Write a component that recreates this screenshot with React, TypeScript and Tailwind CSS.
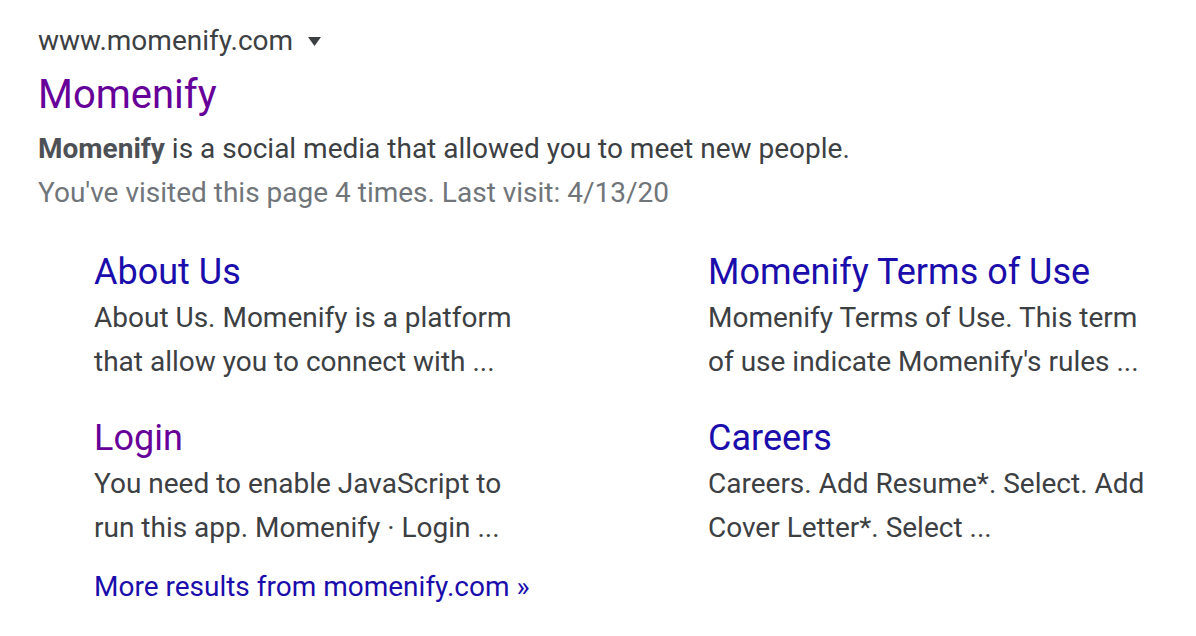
import React from "react";

const font = { fontFamily: "Roboto, 'Liberation Sans', Arial, sans-serif" };

function Sitelink({
  title,
  lines,
  visited,
}: {
  title: string;
  lines: string[];
  visited?: boolean;
}) {
  return (
    <div className="flex flex-col">
      <div
        className={`text-[36px] leading-[48px] whitespace-nowrap ${
          visited ? "text-[#660099]" : "text-[#1a0dab]"
        }`}
      >
        {title}
      </div>
      {lines.map((l, i) => (
        <div
          key={i}
          className="text-[28px] leading-[44px] text-[#3c4043] whitespace-nowrap"
        >
          {l}
        </div>
      ))}
    </div>
  );
}

export default function App() {
  return (
    <div
      className="w-[1196px] h-[636px] bg-white overflow-hidden pl-[38px] pt-[21px]"
      style={font}
    >
      <div className="flex items-center h-[40px]">
        <span className="text-[28px] leading-[40px] text-[#3c4043]">
          www.momenify.com
        </span>
        <svg
          width="13"
          height="9"
          viewBox="0 0 13 9"
          className="ml-[15px] mt-[1px]"
        >
          <polygon points="0,0 13,0 6.5,9" fill="#3c4043" />
        </svg>
      </div>
      <div className="mt-[8px] text-[40px] leading-[52px] text-[#660099]">
        Momenify
      </div>
      <div className="mt-[6px] text-[28px] leading-[44px] text-[#3c4043]">
        <span className="font-bold text-[#4d5156]">Momenify</span> is a social
        media that allowed you to meet new people.
      </div>
      <div className="mt-[2px] text-[28px] leading-[40px] text-[#70757a]">
        You've visited this page 4 times. Last visit: 4/13/20
      </div>
      <div className="mt-[35px] pl-[56px] grid grid-cols-[614px_1fr]">
        <div className="flex flex-col">
          <Sitelink
            title="About Us"
            lines={[
              "About Us. Momenify is a platform",
              "that allow you to connect with ...",
            ]}
          />
          <div className="mt-[30px]">
            <Sitelink
              title="Login"
              visited
              lines={[
                "You need to enable JavaScript to",
                "run this app. Momenify · Login ...",
              ]}
            />
          </div>
          <div className="mt-[15px] text-[28px] leading-[44px] text-[#1a0dab] whitespace-nowrap">
            More results from momenify.com »
          </div>
        </div>
        <div className="flex flex-col">
          <Sitelink
            title="Momenify Terms of Use"
            lines={[
              "Momenify Terms of Use. This term",
              "of use indicate Momenify's rules ...",
            ]}
          />
          <div className="mt-[30px]">
            <Sitelink
              title="Careers"
              lines={[
                "Careers. Add Resume*. Select. Add",
                "Cover Letter*. Select ...",
              ]}
            />
          </div>
        </div>
      </div>
    </div>
  );
}
